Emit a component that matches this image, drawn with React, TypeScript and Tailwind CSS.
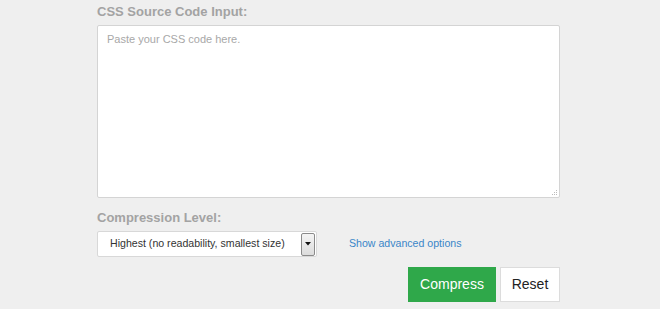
export default function App() {
  return (
    <div className="min-h-[309px] w-[660px] bg-[#efefef] font-['Liberation_Sans',Arial,sans-serif]">
      <div className="ml-[97px] w-[463px] pt-[4px]">
        <div className="text-[13px] font-bold leading-[16px] text-[#a3a3a3]">CSS Source Code Input:</div>
        <div className="relative mt-[5px]">
          <textarea
            placeholder="Paste your CSS code here."
            className="block h-[173px] w-[463px] resize-none rounded-[2px] border border-[#d4d4d4] bg-white px-[9px] pt-[6px] pb-[6px] text-[11px] leading-[14px] text-[#333] outline-none placeholder:text-[#a8a8a8]"
          />
          <div className="absolute bottom-[3px] right-[3px] grid grid-cols-3 gap-[1px]">
            <span className="h-[1px] w-[1px]" />
            <span className="h-[1px] w-[1px]" />
            <span className="h-[1px] w-[1px] bg-[#bbb]" />
            <span className="h-[1px] w-[1px]" />
            <span className="h-[1px] w-[1px] bg-[#bbb]" />
            <span className="h-[1px] w-[1px] bg-[#bbb]" />
            <span className="h-[1px] w-[1px] bg-[#bbb]" />
            <span className="h-[1px] w-[1px] bg-[#bbb]" />
            <span className="h-[1px] w-[1px] bg-[#bbb]" />
          </div>
        </div>
        <div className="mt-[12px] text-[13px] font-bold leading-[16px] text-[#a3a3a3]">Compression Level:</div>
        <div className="mt-[5px] flex items-center">
          <div className="flex h-[26px] w-[220px] items-center rounded-[2px] border border-[#d8d8d8] bg-white pl-[12px] pr-[1px]">
            <span className="flex-1 text-[10.6px] text-[#333]">Highest (no readability, smallest size)</span>
            <div className="flex h-[23px] w-[14px] items-center justify-center rounded-[2px] border border-[#8a8a8a] bg-gradient-to-b from-[#f4f4f4] to-[#dcdcdc]">
              <svg width="6" height="4" viewBox="0 0 6 4">
                <path d="M0 0 H6 L3 3.5 Z" fill="#111" />
              </svg>
            </div>
          </div>
          <a className="ml-[32px] text-[10.6px] text-[#3a86c8]">Show advanced options</a>
        </div>
        <div className="mt-[10px] flex justify-end gap-[4px]">
          <button className="h-[35px] w-[88px] bg-[#2fa84a] text-[14px] text-white">Compress</button>
          <button className="h-[35px] w-[60px] border border-[#dcdcdc] bg-white text-[14px] text-[#222]">Reset</button>
        </div>
      </div>
    </div>
  );
}
